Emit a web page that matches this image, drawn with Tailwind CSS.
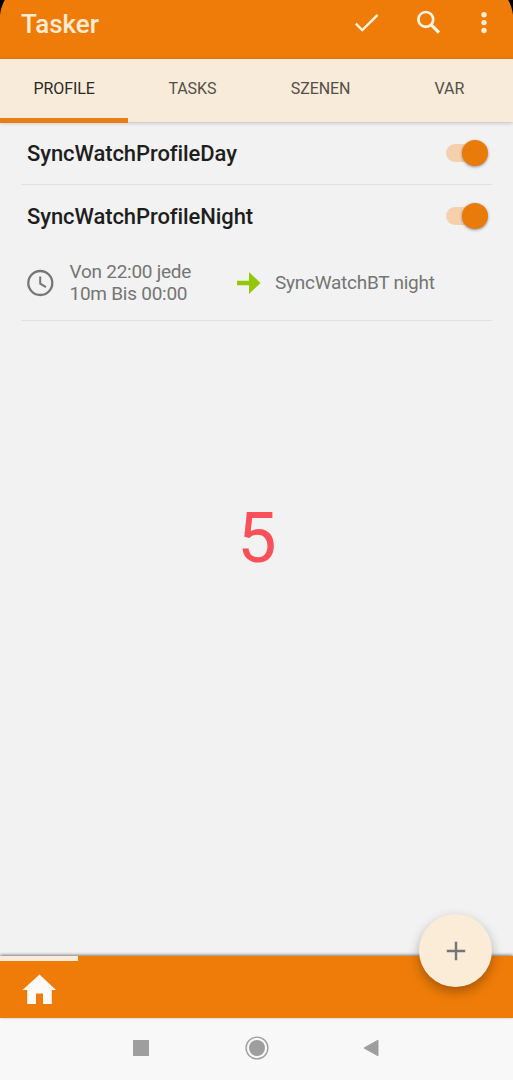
<!DOCTYPE html>
<html lang="de">
<head>
  <meta charset="UTF-8" />
  <meta name="viewport" content="width=device-width, initial-scale=1.0" />
  <title>Tasker</title>
  <script src="https://cdn.jsdelivr.net/npm/@tailwindcss/browser@4"></script>
</head>
<body class="bg-[#f2f2f2] h-[1080px] w-[513px] flex flex-col overflow-hidden font-['Roboto',sans-serif]">
  <!-- Header -->
  <header class="relative bg-[#ef7c08] h-[59px] shrink-0 pl-[21px] flex items-start justify-between">
    <h1 class="text-[26px] leading-[30px] pt-[9px] font-medium text-[#fdebd2]">Tasker</h1>
    <div class="flex">
      <svg class="w-[40px] h-[46px]" viewBox="346 0 40 46" fill="none" stroke="#fff4e0" stroke-width="2.4"><path d="M355.8 23.6l6.5 6.5 15.3-15.3" /></svg>
      <svg class="w-[40px] h-[46px] ml-[23px]" viewBox="409 0 40 46" fill="none" stroke="#fff4e0"><circle cx="425.8" cy="19.4" r="7.4" stroke-width="2.7" /><path d="M430.8 24.4l8.2 8.2" stroke-width="3.3" /></svg>
      <svg class="w-[40px] h-[46px] ml-[15px] mr-[9px]" viewBox="464 0 40 46" fill="#fdebd2"><circle cx="484" cy="14.8" r="2.7" /><circle cx="484" cy="22.6" r="2.7" /><circle cx="484" cy="30.5" r="2.7" /></svg>
    </div>
    <!-- Rounded display corners -->
    <svg class="absolute left-0 top-0 w-[5px] h-[16px]" viewBox="0 0 5 16"><path d="M0 0h4.8Q1.2 6 0 15z" /></svg>
    <svg class="absolute right-0 top-0 w-[5px] h-[16px]" viewBox="0 0 5 16"><path d="M5 0H.2Q3.8 6 5 15z" /></svg>
  </header>
  <!-- Tabs -->
  <nav class="relative z-10 bg-[#f8ebda] h-[63px] shrink-0 grid grid-cols-4 text-center text-base leading-[59px] tracking-[-0.1px] text-[#554f48] shadow-[0_1px_4px_rgba(0,0,0,0.22)]">
    <a class="border-b-[5px] border-[#e77d14] text-[#2d2925]">PROFILE</a>
    <a>TASKS</a>
    <a>SZENEN</a>
    <a class="pl-px">VAR</a>
  </nav>
  <!-- Profiles -->
  <main class="relative grow px-[21px]">
    <section class="h-[63px] border-b border-[#e1e1e1] pl-[6px] pr-[4px] flex items-center justify-between">
      <h2 class="text-[22px] tracking-[-0.08px] font-medium text-[#1e1e1e]">SyncWatchProfileDay</h2>
      <div class="relative w-[42px] h-[18px]">
        <div class="w-[36px] h-[18px] rounded-full bg-[#f5d0ac]"></div>
        <div class="absolute right-0 -top-1 size-[26px] rounded-full bg-[#e87b0a] shadow-[0_1px_3px_rgba(0,0,0,0.4)]"></div>
      </div>
    </section>
    <section class="h-[136px] border-b border-[#e1e1e1] pl-[6px] pr-[4px]">
      <div class="h-[62px] flex items-center justify-between">
        <h2 class="text-[22px] tracking-[-0.08px] pt-px font-medium text-[#1e1e1e]">SyncWatchProfileNight</h2>
        <div class="relative w-[42px] h-[18px]">
          <div class="w-[36px] h-[18px] rounded-full bg-[#f5d0ac]"></div>
          <div class="absolute right-0 -top-1 size-[26px] rounded-full bg-[#e87b0a] shadow-[0_1px_3px_rgba(0,0,0,0.4)]"></div>
        </div>
      </div>
      <div class="flex items-center h-[72px] text-[19px] leading-[22px] tracking-[-0.25px] text-[#757575]">
        <svg class="size-[28px] -ml-px" viewBox="0 0 28 28" fill="none" stroke="#757575"><circle cx="14.3" cy="14" r="12" stroke-width="2.3" /><path d="M14.2 7.6v7l5.8 3.5" stroke-width="2" /></svg>
        <p class="w-[150px] ml-[15.5px]">Von 22:00 jede<br />10m Bis 00:00</p>
        <svg class="w-[26px] h-[24px] ml-[16.5px]" viewBox="0 0 26 24" fill="#94c60a"><path d="M1 9.8h12V1l11.5 11L13 23v-8.8H1z" /></svg>
        <p class="ml-[13px]">SyncWatchBT night</p>
      </div>
    </section>
    <p class="pt-[176px] pl-px text-center text-[70px] leading-[82px] text-[#fb505a]">5</p>
  </main>
  <!-- Project bar -->
  <footer class="relative bg-[#ef7c08] h-[62px] shrink-0 shadow-[0_-1px_3px_rgba(0,0,0,0.5)]">
    <div class="w-[78px] h-[5px] bg-[#f8ebda]"></div>
    <svg class="w-[34px] h-[31px] ml-[22px] mt-[13px]" viewBox="0 0 34 31" fill="#fcfaf7"><path d="M17.5 .5L34 16h-4.2v14h-8.8V19.5h-7V30H5.2V16H.5z" /></svg>
    <button class="absolute right-[21px] -top-[42px] size-[73px] rounded-full bg-[#fbecd8] flex items-center justify-center shadow-[0_5px_12px_rgba(0,0,0,0.3)]">
      <svg class="size-[20px]" viewBox="0 0 20 20" stroke="#757575" stroke-width="2.4"><path d="M.8 10h18.4M10 .8v18.4" /></svg>
    </button>
  </footer>
  <!-- Android navigation -->
  <nav class="bg-[#f8f8f8] h-[62px] shrink-0 flex items-center justify-between pl-[133px] pr-[134px] pb-[2px]">
    <div class="size-[16px] bg-[#9e9e9e]"></div>
    <svg class="size-[24px] ml-px" viewBox="0 0 24 24" fill="#9e9e9e"><circle cx="12" cy="12" r="8" /><circle cx="12" cy="12" r="10.9" fill="none" stroke="#9e9e9e" stroke-width="1.4" /></svg>
    <svg class="w-[16px] h-[18px]" viewBox="0 0 16 18" fill="#9e9e9e" stroke="#9e9e9e" stroke-linejoin="round"><path d="M15 1.2v15.6L1 9z" /></svg>
  </nav>
</body>
</html>
